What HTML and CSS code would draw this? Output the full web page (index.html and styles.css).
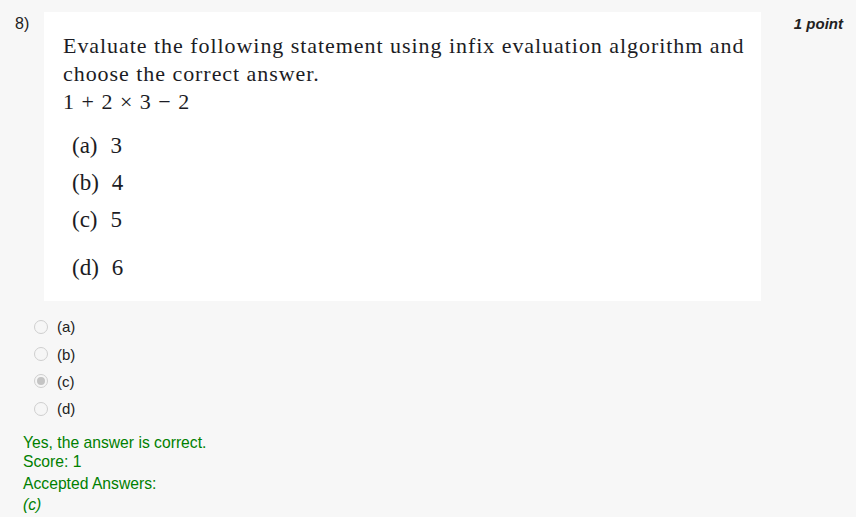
FILE: index.html
```html
<!DOCTYPE html>
<html>
<head>
<meta charset="utf-8">
<link rel="stylesheet" href="styles.css">
</head>
<body>
<div class="page">
  <div class="question">
    <div class="qnum">8)</div>
    <div class="qmain">
      <div class="qbox">
        <p class="stmt">Evaluate the following statement using infix evaluation algorithm and<br>choose the correct answer.</p>
        <p class="expr"><span>1</span><span>+</span><span>2</span><span>×</span><span>3</span><span>−</span><span>2</span></p>
        <ol class="opts">
          <li class="opt"><span class="lbl">(a)</span><span>3</span></li>
          <li class="opt"><span class="lbl">(b)</span><span>4</span></li>
          <li class="opt"><span class="lbl">(c)</span><span>5</span></li>
          <li class="opt opt-last"><span class="lbl">(d)</span><span>6</span></li>
        </ol>
      </div>
      <div class="choices">
        <label class="choice"><span class="radio"></span>(a)</label>
        <label class="choice"><span class="radio"></span>(b)</label>
        <label class="choice"><span class="radio checked"></span>(c)</label>
        <label class="choice"><span class="radio"></span>(d)</label>
      </div>
    </div>
    <div class="points">1 point</div>
  </div>
  <div class="feedback">
    <div class="fb-line">Yes, the answer is correct.</div>
    <div class="fb-line">Score: 1</div>
    <div class="fb-accepted">Accepted Answers:</div>
    <div class="fb-line fb-ans">(c)</div>
  </div>
</div>
</body>
</html>
```

FILE: styles.css
```css
html, body {
  margin: 0;
  padding: 0;
  background: #ffffff;
}
.page {
  width: 856px;
  height: 517px;
  background: #f7f7f7;
  box-sizing: border-box;
  padding-top: 12px;
  font-family: "Liberation Sans", Arial, sans-serif;
  color: #222;
  overflow: hidden;
}
.question {
  display: flex;
  align-items: flex-start;
}
.qnum {
  width: 44px;
  box-sizing: border-box;
  padding-left: 15px;
  padding-top: 3px;
  font-size: 16px;
  line-height: 18px;
  color: #222;
}
.qmain {
  width: 717px;
}
.qbox {
  background: #ffffff;
  height: 289px;
  box-sizing: border-box;
  padding: 20px 0 0 19px;
  font-family: "Liberation Serif", "Times New Roman", serif;
  color: #1c1c24;
}
.stmt {
  margin: 0;
  font-size: 22px;
  line-height: 28px;
  letter-spacing: 0.95px;
  white-space: nowrap;
}
.expr {
  margin: 0;
  font-size: 22px;
  line-height: 28px;
  display: flex;
  gap: 7.5px;
}
.opts {
  list-style: none;
  margin: 15px 0 0 0;
  padding: 0 0 0 9px;
  font-size: 23px;
}
.opt {
  display: flex;
  gap: 13px;
  height: 37px;
  line-height: 30px;
}
.opt-last {
  margin-top: 11px;
}
.choices {
  padding: 12px 0 0 0;
  display: flex;
  flex-direction: column;
  margin-left: -10px;
}
.choice {
  display: flex;
  align-items: center;
  height: 27.4px;
  font-size: 15px;
  color: #222;
}
.radio {
  width: 14px;
  height: 14px;
  border-radius: 50%;
  border: 1px solid #cfcfcf;
  background: #f6f6f6;
  box-sizing: border-box;
  margin-right: 9px;
  position: relative;
}
.radio.checked::after {
  content: "";
  position: absolute;
  left: 2px;
  top: 2px;
  width: 8px;
  height: 8px;
  border-radius: 50%;
  background: #c4c4c4;
}
.points {
  margin-left: auto;
  margin-right: 13px;
  padding-top: 3px;
  font-size: 15px;
  font-weight: bold;
  font-style: italic;
  color: #222;
}
.feedback {
  padding: 10px 0 0 23px;
  color: #008000;
  font-size: 15.7px;
  line-height: 19px;
}
.fb-accepted {
  margin-top: 3px;
}
.fb-ans {
  font-style: italic;
  margin-top: 2px;
}
```
